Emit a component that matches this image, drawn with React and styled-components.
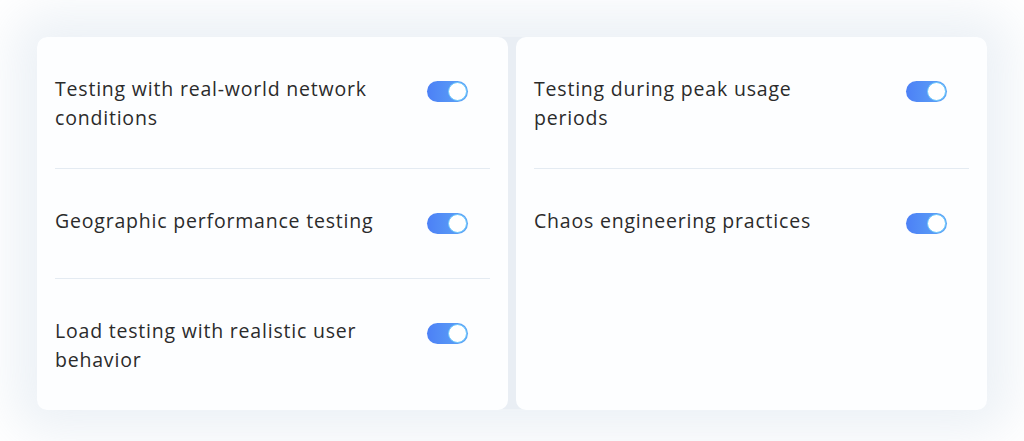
import React from "react";
import styled, { createGlobalStyle } from "styled-components";

const Global = createGlobalStyle`
  html, body { margin: 0; padding: 0; background: #ffffff; }
  body { font-family: "Open Sans", "Noto Sans", sans-serif; }
`;

const Page = styled.div`
  width: 1024px;
  height: 441px;
  box-sizing: border-box;
  padding: 37px 37px 32px;
  overflow: hidden;
  background: #ffffff;
`;

const Board = styled.div`
  display: grid;
  grid-template-columns: 471px 471px;
  gap: 8px;
  height: 372px;
  background: #e9eef4;
  border-radius: 10px;
  box-shadow: 0 0 50px 24px rgba(233, 238, 244, 0.85);
`;

const Card = styled.div`
  background: #fdfeff;
  border-radius: 10px;
  padding: 0 18px;
  display: flex;
  flex-direction: column;
`;

const Row = styled.div`
  display: flex;
  align-items: flex-start;
  justify-content: space-between;
  min-height: 36px;
  padding: 37px 22px 36px 0;
  border-bottom: ${(p) => (p.$last ? "none" : "1.5px solid #e4ebf2")};
`;

const Label = styled.div`
  width: 322px;
  font-size: 19.5px;
  line-height: 29px;
  color: #2b2b2b;
  letter-spacing: 0.8px;
`;

const Track = styled.div`
  margin-top: 7px;
  width: 41px;
  height: 21px;
  border-radius: 11px;
  background: linear-gradient(90deg, #4c80f6 0%, #5ea6f6 100%);
  display: flex;
  align-items: center;
  justify-content: flex-end;
  padding: 0 1px;
  box-sizing: border-box;
`;

const Knob = styled.div`
  width: 19px;
  height: 19px;
  border-radius: 50%;
  background: #ffffff;
  box-sizing: border-box;
  border: 1.5px solid #6cc8fb;
`;

const Toggle = () => (
  <Track>
    <Knob />
  </Track>
);

const left = [
  "Testing with real-world network conditions",
  "Geographic performance testing",
  "Load testing with realistic user behavior",
];
const right = ["Testing during peak usage periods", "Chaos engineering practices"];

const Column = ({ items }) => (
  <Card>
    {items.map((t, i) => (
      <Row key={t} $last={i === items.length - 1}>
        <Label>{t}</Label>
        <Toggle />
      </Row>
    ))}
  </Card>
);

export default function App() {
  return (
    <>
      <Global />
      <Page>
        <Board>
          <Column items={left} />
          <Column items={right} />
        </Board>
      </Page>
    </>
  );
}
